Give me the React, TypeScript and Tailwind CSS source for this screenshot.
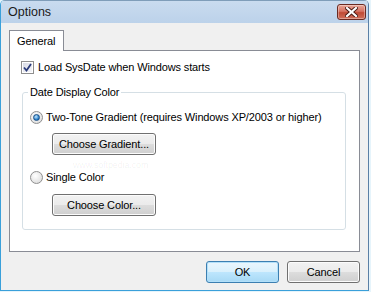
import React from "react";

const font = { fontFamily: '"Liberation Sans", Arial, sans-serif' };

function CloseButton() {
  return (
    <div className="w-[29px] h-[16px] rounded-[3px] border border-[#6b2a22] bg-[linear-gradient(to_bottom,#e9a597_0%,#d67363_45%,#c04a35_55%,#d0705c_100%)] flex items-center justify-center shadow-[inset_0_0_0_1px_rgba(255,255,255,0.35)]">
      <svg width="13" height="10" viewBox="0 0 13 10">
        <path d="M2 1 L11 9 M11 1 L2 9" stroke="#4a1a14" strokeWidth="4" strokeLinecap="square" />
        <path d="M2 1 L11 9 M11 1 L2 9" stroke="#ffffff" strokeWidth="2.2" strokeLinecap="square" />
      </svg>
    </div>
  );
}

function Checkbox() {
  return (
    <div className="w-[13px] h-[13px] border border-[#8f8f8f] bg-white p-px shrink-0">
      <div className="w-full h-full bg-[linear-gradient(135deg,#d9dbe6,#f4f4f8)] flex items-center justify-center">
        <svg width="9" height="9" viewBox="0 0 9 9">
          <path d="M1 4.5 L3.5 7.5 L8 1" fill="none" stroke="#2a3b7a" strokeWidth="1.8" />
        </svg>
      </div>
    </div>
  );
}

function Radio({ checked }: { checked?: boolean }) {
  return (
    <div className="w-[13px] h-[13px] rounded-full border border-[#8f8f8f] bg-[radial-gradient(circle_at_40%_35%,#ffffff,#d6d6d6)] flex items-center justify-center shrink-0">
      {checked && (
        <div className="w-[7px] h-[7px] rounded-full bg-[radial-gradient(circle_at_40%_35%,#bfe6ff,#1c75c2_70%,#0d4f8e)] border border-[#1a4f86]" />
      )}
    </div>
  );
}

function Button({ children, w, primary }: { children: React.ReactNode; w: string; primary?: boolean }) {
  return (
    <div
      className={`${w} h-[22px] rounded-[3px] border flex items-center justify-center text-black ${
        primary
          ? "border-[#3c7fb1] bg-[linear-gradient(to_bottom,#eaf6fd_0%,#d9f0fc_50%,#bee6fd_50%,#a7d9f5_100%)] shadow-[inset_0_0_0_1px_#b3e0f9]"
          : "border-[#707070] bg-[linear-gradient(to_bottom,#f2f2f2_0%,#ebebeb_50%,#dddddd_50%,#cfcfcf_100%)] shadow-[inset_0_0_0_1px_#fcfcfc]"
      }`}
    >
      {children}
    </div>
  );
}

export default function App() {
  return (
    <div className="w-[371px] h-[292px] bg-[#e6f4fb] text-[11px] tracking-[-0.13px] text-black overflow-hidden" style={font}>
      <div className="w-[369px] h-[291px] flex flex-col border-l border-r border-b border-l-[#3aa0da] border-r-[#5a7fa5] border-b-[#3aa0da] rounded-t-[5px] bg-[#f0f0f0] overflow-hidden">
        {/* Title bar */}
        <div className="h-[23px] shrink-0 flex items-center justify-between pl-[7px] pr-[2px] bg-[linear-gradient(to_bottom,#c9dbef,#bcd2ea)] border-t border-[#7f9db9]">
          <span className="text-[12.5px] tracking-normal text-[#1a1a1a]">Options</span>
          <CloseButton />
        </div>

        {/* Body */}
        <div className="flex-1 flex flex-col pl-[8px] pr-[8px] pt-[7px] bg-[#f0f0f0]">
          {/* Tab */}
          <div className="flex">
            <div className="relative z-10 -mb-px h-[21px] pl-[7px] pr-[8px] border border-b-0 border-[#898c95] bg-white flex items-center">
              General
            </div>
          </div>

          {/* Panel */}
          <div className="h-[202px] border border-[#898c95] bg-white pl-[11px] pt-[10px] pr-[13px]">
            <div className="flex items-center gap-[4px] h-[13px]">
              <Checkbox />
              <span>Load SysDate when Windows starts</span>
            </div>

            <fieldset className="mt-[11px] ml-px border border-[#d5dfe5] rounded-[3px] pl-[7px] pb-[13px]">
              <legend className="-ml-[2px] px-[2px] leading-[14px]">Date Display Color</legend>
              <div className="flex items-center gap-[3px] h-[13px] mt-[12px]">
                <Radio checked />
                <span>Two-Tone Gradient (requires Windows XP/2003 or higher)</span>
              </div>
              <div className="mt-[9px] ml-[22px]">
                <Button w="w-[104px]">Choose Gradient...</Button>
              </div>
              <div className="relative flex items-center gap-[3px] h-[13px] mt-[16px]">
                <Radio />
                <span>Single Color</span>
                <span className="absolute left-[43px] -top-[10px] text-[9px] leading-[9px] text-black/[0.06] pointer-events-none">
                  www.softpedia.com
                </span>
              </div>
              <div className="mt-[10px] ml-[22px]">
                <Button w="w-[104px]">Choose Color...</Button>
              </div>
            </fieldset>
          </div>

          {/* Footer buttons */}
          <div className="flex justify-end gap-[8px] mt-[9px]">
            <Button w="w-[73px]" primary>
              OK
            </Button>
            <Button w="w-[73px]">Cancel</Button>
          </div>
        </div>
      </div>
    </div>
  );
}
